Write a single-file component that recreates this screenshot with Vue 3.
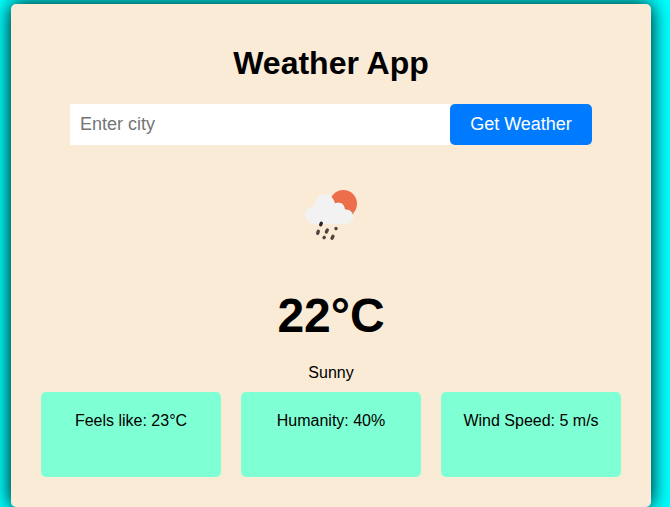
<script setup>
const details = ['Feels like: 23°C', 'Humanity: 40%', 'Wind Speed: 5 m/s']
</script>

<template>
  <main class="page">
    <section class="card">
      <h1 class="title">Weather App</h1>
      <form class="search" @submit.prevent>
        <input class="city" type="text" placeholder="Enter city" />
        <button class="submit" type="submit">Get Weather</button>
      </form>
      <svg class="icon" width="80" height="70" viewBox="0 0 240 210" aria-hidden="true">
        <circle cx="160" cy="71" r="41" fill="#ed6e4b" />
        <path
          d="M74 132C57 132 46 121 46 105C46 90 58 79 75 79C74 58 87 43 104 43C118 43 130 52 135 69C149 62 164 70 166 87C180 86 190 96 190 109C190 123 180 132 166 132Z"
          fill="#f2f2f3"
        />
        <path d="M135 69C149 62 164 70 166 87C178 87 187 94 190 103" fill="none" stroke="#dd593b" stroke-width="2" />
        <g stroke="#51443e" stroke-width="10" stroke-linecap="round">
          <path d="M94 130L92 134" stroke="#292522" />
          <path d="M85 154L83 160" />
          <path d="M112 150L109 156" />
          <path d="M138 145L138 146" />
          <path d="M103 172L102 173" />
          <path d="M129 169L126 175" />
        </g>
      </svg>
      <h2 class="temperature">22°C</h2>
      <p class="condition">Sunny</p>
      <div class="details">
        <div v-for="item in details" :key="item" class="detail">{{ item }}</div>
      </div>
    </section>
  </main>
</template>

<style>
body {
  background: #00ffff;
  overflow: hidden;
}
</style>

<style scoped>
.page {
  box-sizing: border-box;
  height: 507px;
  padding: 4px 19px 0 11px;
  font-family: "Liberation Sans", Arial, sans-serif;
  color: #000;
}
.card {
  box-sizing: border-box;
  display: flex;
  flex-direction: column;
  align-items: center;
  height: 503px;
  padding: 39px 30px 30px;
  border-radius: 5px;
  background: #faebd7;
  box-shadow: 0 0 20px #000;
}
.title {
  margin: 0;
  font-size: 32px;
  line-height: 40px;
}
.search {
  display: flex;
  width: 522px;
  height: 41px;
  margin-top: 21px;
}
.city {
  flex: 1;
  min-width: 0;
  padding: 0 10px;
  border: 0;
  border-radius: 0;
  background: #fff;
  font: 18px "Liberation Sans", Arial, sans-serif;
}
.city::placeholder {
  color: #757575;
}
.submit {
  width: 142px;
  padding: 0;
  border: 0;
  border-radius: 5px;
  background: #007bff;
  color: #fff;
  font: 18px "Liberation Sans", Arial, sans-serif;
}
.icon {
  flex: none;
  margin: 35px 2px 0 0;
}
.temperature {
  margin: 38px 0 0;
  font-size: 48px;
  line-height: 56px;
}
.condition {
  margin: 20px 0 0;
  font-size: 16px;
  line-height: 18px;
}
.details {
  display: flex;
  gap: 20px;
  width: 100%;
  margin-top: 10px;
}
.detail {
  box-sizing: border-box;
  flex: 1;
  height: 85px;
  padding-top: 19px;
  border-radius: 5px;
  background: #7fffd4;
  font-size: 16px;
  line-height: 20px;
  text-align: center;
}
</style>
